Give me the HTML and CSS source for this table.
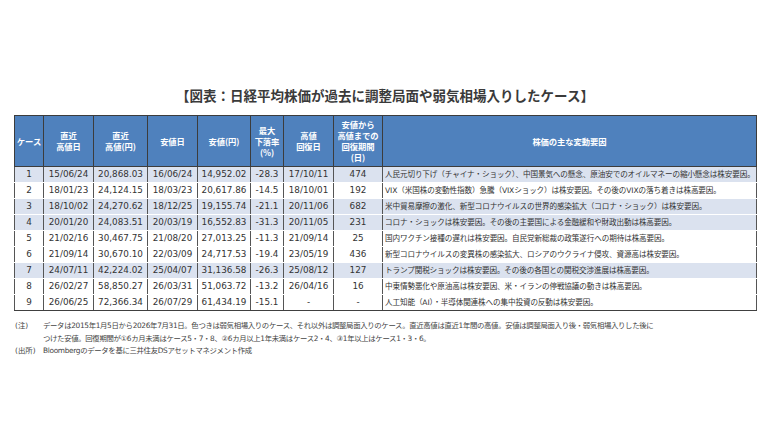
FILE: index.html
```html
<!DOCTYPE html>
<html lang="ja">
<head>
<meta charset="utf-8">
<title>日経平均株価が過去に調整局面や弱気相場入りしたケース</title>
<link rel="stylesheet" href="styles.css">
</head>
<body>
<div class="page">
  <h1 class="title">【図表：日経平均株価が過去に調整局面や弱気相場入りしたケース】</h1>
  <table class="data">
    <colgroup>
      <col class="c-case"><col class="c-date"><col class="c-price"><col class="c-date"><col class="c-price2"><col class="c-pct"><col class="c-date"><col class="c-days"><col>
    </colgroup>
    <thead>
      <tr>
        <th>ケース</th>
        <th>直近<br>高値日</th>
        <th>直近<br>高値(円)</th>
        <th>安値日</th>
        <th>安値(円)</th>
        <th>最大<br>下落率<br>(%)</th>
        <th>高値<br>回復日</th>
        <th>安値から<br>高値までの<br>回復期間<br>(日)</th>
        <th>株価の主な変動要因</th>
      </tr>
    </thead>
    <tbody>
      <tr class="shade"><td>1</td><td>15/06/24</td><td>20,868.03</td><td>16/06/24</td><td>14,952.02</td><td>-28.3</td><td>17/10/11</td><td>474</td><td class="cause">人民元切り下げ（チャイナ・ショック）、中国景気への懸念、原油安でのオイルマネーの縮小懸念は株安要因。</td></tr>
      <tr><td>2</td><td>18/01/23</td><td>24,124.15</td><td>18/03/23</td><td>20,617.86</td><td>-14.5</td><td>18/10/01</td><td>192</td><td class="cause">VIX（米国株の変動性指数）急騰（VIXショック）は株安要因。その後のVIXの落ち着きは株高要因。</td></tr>
      <tr class="shade"><td>3</td><td>18/10/02</td><td>24,270.62</td><td>18/12/25</td><td>19,155.74</td><td>-21.1</td><td>20/11/06</td><td>682</td><td class="cause">米中貿易摩擦の激化、新型コロナウイルスの世界的感染拡大（コロナ・ショック）は株安要因。</td></tr>
      <tr class="shade"><td>4</td><td>20/01/20</td><td>24,083.51</td><td>20/03/19</td><td>16,552.83</td><td>-31.3</td><td>20/11/05</td><td>231</td><td class="cause">コロナ・ショックは株安要因。その後の主要国による金融緩和や財政出動は株高要因。</td></tr>
      <tr><td>5</td><td>21/02/16</td><td>30,467.75</td><td>21/08/20</td><td>27,013.25</td><td>-11.3</td><td>21/09/14</td><td>25</td><td class="cause">国内ワクチン接種の遅れは株安要因。自民党新総裁の政策遂行への期待は株高要因。</td></tr>
      <tr><td>6</td><td>21/09/14</td><td>30,670.10</td><td>22/03/09</td><td>24,717.53</td><td>-19.4</td><td>23/05/19</td><td>436</td><td class="cause">新型コロナウイルスの変異株の感染拡大、ロシアのウクライナ侵攻、資源高は株安要因。</td></tr>
      <tr class="shade"><td>7</td><td>24/07/11</td><td>42,224.02</td><td>25/04/07</td><td>31,136.58</td><td>-26.3</td><td>25/08/12</td><td>127</td><td class="cause">トランプ関税ショックは株安要因。その後の各国との関税交渉進展は株高要因。</td></tr>
      <tr><td>8</td><td>26/02/27</td><td>58,850.27</td><td>26/03/31</td><td>51,063.72</td><td>-13.2</td><td>26/04/16</td><td>16</td><td class="cause">中東情勢悪化や原油高は株安要因、米・イランの停戦協議の動きは株高要因。</td></tr>
      <tr><td>9</td><td>26/06/25</td><td>72,366.34</td><td>26/07/29</td><td>61,434.19</td><td>-15.1</td><td>-</td><td>-</td><td class="cause">人工知能（AI）・半導体関連株への集中投資の反動は株安要因。</td></tr>
    </tbody>
  </table>
  <div class="notes">
    <div class="note"><span class="lbl">(注)</span><span class="txt">データは2015年1月5日から2026年7月31日。色つきは弱気相場入りのケース、それ以外は調整局面入りのケース。直近高値は直近1年間の高値。安値は調整局面入り後・弱気相場入りした後に<br>つけた安値。回復期間が①6カ月未満はケース5・7・8、②6カ月以上1年未満はケース2・4、③1年以上はケース1・3・6。</span></div>
    <div class="note"><span class="lbl">(出所)</span><span class="txt">Bloombergのデータを基に三井住友DSアセットマネジメント作成</span></div>
  </div>
</div>
</body>
</html>
```
FILE: styles.css
```css
html, body {
  margin: 0;
  padding: 0;
  background: #ffffff;
}
body {
  font-family: "DejaVu Sans", "Noto Sans CJK JP", sans-serif;
  color: #333333;
}
.page {
  width: 770px;
  height: 433px;
  padding-top: 86px;
  box-sizing: border-box;
  overflow: hidden;
}
.title {
  margin: 0 0 11px;
  text-align: center;
  font-family: "Noto Sans CJK JP", sans-serif;
  font-weight: bold;
  font-size: 13.5px;
  line-height: 18px;
  color: #3a3a3a;
}
.data {
  margin-left: 14px;
  width: 743px;
  border-collapse: collapse;
  table-layout: fixed;
  border: 1px solid #404040;
}
.c-case { width: 29px; }
.c-date { width: 50px; }
.c-price { width: 54px; }
.c-price2 { width: 53px; }
.c-pct { width: 33px; }
.c-days { width: 49px; }
.data th {
  height: 50px;
  padding: 0;
  background: #4f81bd;
  color: #ffffff;
  font-family: "Noto Sans CJK JP", sans-serif;
  font-weight: bold;
  font-size: 8.3px;
  line-height: 11px;
  letter-spacing: -0.05px;
  border: 1px solid #3c3c3c;
  text-align: center;
  vertical-align: middle;
}
.data tbody tr {
  height: 16px;
}
.data td {
  padding: 0;
  font-size: 8.8px;
  line-height: 15px;
  text-align: center;
  color: #333333;
  border-left: 1px solid #555555;
  border-right: 1px solid #555555;
  border-top: 1px solid #ffffff;
  border-bottom: 1px solid #ffffff;
  white-space: nowrap;
}
.data tbody tr:last-child td {
  border-bottom: 1px solid #404040;
}
.data td.cause {
  text-align: left;
  padding-left: 2px;
  font-family: "DejaVu Sans", "Noto Sans CJK JP", sans-serif;
  font-size: 7.6px;
  letter-spacing: -0.12px;
  overflow: hidden;
}
.data .shade td {
  background: #dbe2ef;
}
.notes {
  margin: 9px 0 0 15px;
  font-family: "DejaVu Sans", "Noto Sans CJK JP", sans-serif;
  font-size: 7.4px;
  line-height: 12.5px;
  color: #444444;
}
.note {
  display: flex;
}
.lbl {
  flex: none;
  width: 28px;
}
.txt {
  letter-spacing: -0.34px;
}
```
